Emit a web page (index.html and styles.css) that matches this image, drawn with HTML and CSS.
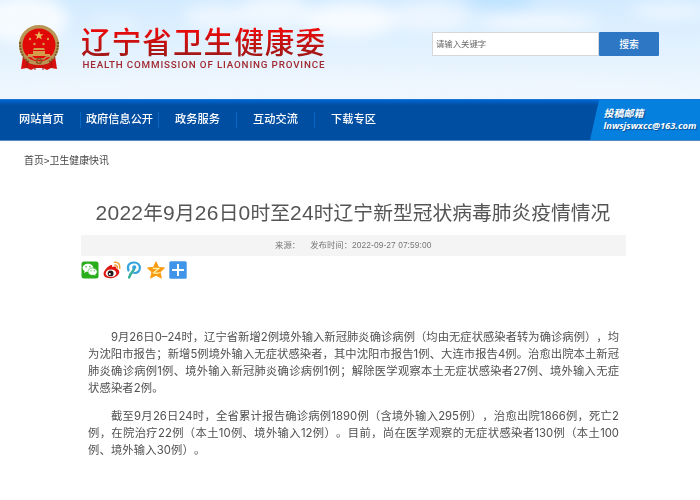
FILE: index.html
```html
<!DOCTYPE html>
<html lang="zh-CN">
<head>
<meta charset="utf-8">
<title>辽宁省卫生健康委</title>
<link rel="stylesheet" href="styles.css">
</head>
<body>
<header class="header">
  <svg class="sky" viewBox="0 0 700 99" preserveAspectRatio="none" aria-hidden="true">
    <defs>
      <linearGradient id="sky" x2="0" y2="1"><stop stop-color="#d3ebff"/><stop offset=".45" stop-color="#e1f1fe"/><stop offset="1" stop-color="#f0f7fe"/></linearGradient>
      <filter id="soft" x="-30%" y="-100%" width="160%" height="300%"><feGaussianBlur stdDeviation="7"/></filter>
    </defs>
    <rect width="700" height="99" fill="url(#sky)"/>
    <g fill="#f5faff" filter="url(#soft)">
      <ellipse cx="25" cy="20" rx="43" ry="25"/><ellipse cx="115" cy="24" rx="24" ry="9" opacity=".4"/>
      <ellipse cx="217" cy="17" rx="34" ry="13" opacity=".7"/><ellipse cx="275" cy="12" rx="35" ry="17" opacity=".8"/>
      <ellipse cx="350" cy="20" rx="48" ry="17"/><ellipse cx="430" cy="17" rx="42" ry="15" opacity=".7"/>
      <ellipse cx="538" cy="22" rx="62" ry="9" opacity=".8"/><ellipse cx="670" cy="11" rx="40" ry="8" opacity=".7"/>
      <ellipse cx="350" cy="84" rx="330" ry="10" opacity=".35"/>
    </g>
    <ellipse cx="500" cy="-2" rx="35" ry="8" fill="#bae1ff" filter="url(#soft)"/>
  </svg>
  <svg class="emblem" viewBox="0 0 42 46" aria-hidden="true">
    <path d="M5 31 3 44l6-1 4 2 4-2h8l4 2 4-2 6 1-2-13z" fill="#d6110d"/>
    <circle cx="21" cy="20" r="18" fill="#dc0907" stroke="#b99655" stroke-width="4"/>
    <path d="M2 17q0 18 14 22M40 17q0 18-14 22" fill="none" stroke="#7f5928" stroke-width="2" stroke-dasharray="2 1"/>
    <circle cx="21" cy="20" r="16.5" fill="#e00907"/>
    <path d="m21 6 1.2 3.2 3.3.1-2.6 2 1 3.2-2.9-1.9-2.9 1.9 1-3.2-2.6-2 3.3-.1z" fill="#e9b65d"/>
    <g fill="#d79c4b"><circle cx="12" cy="14" r="1.2"/><circle cx="30" cy="14" r="1.2"/><circle cx="16.5" cy="19" r="1.2"/><circle cx="25.5" cy="19" r="1.2"/><path d="M16 23h10l1 2H15zM15 26h12v3H15zM10 29h22v2H10z"/></g>
    <path d="M6 32q8-2 10 2h10q3-4 10-2M11 37q5 3 9 0 5 3 11 0" fill="none" stroke="#c09657" stroke-width="1.500"/>
    <circle cx="21" cy="36" r="2.500" fill="none" stroke="#8d5b27" stroke-width="1.500"/>
    <path d="M9 36v7m24-7v7M17 41v4m8-4v4" stroke="#9d130d"/>
  </svg>
  <svg class="brand" viewBox="0 0 248 60" role="img">
    <defs><linearGradient id="red" gradientUnits="userSpaceOnUse" x1="0" y1="13" x2="0" y2="48"><stop stop-color="#ef0909"/><stop offset="1" stop-color="#8e1c1c"/></linearGradient></defs>
    <text class="brand-cn" x="0" y="38" textLength="244" fill="url(#red)">辽宁省卫生健康委</text>
    <text class="brand-en" x="1.500" y="53" textLength="242" fill="#a02a30">HEALTH COMMISSION OF LIAONING PROVINCE</text>
  </svg>
  <form class="search">
    <input class="search-input" type="text" placeholder="请输入关键字">
    <button class="search-button" type="button">搜索</button>
  </form>
</header>
<nav class="nav">
  <a class="nav-item">网站首页</a><a class="nav-item">政府信息公开</a><a class="nav-item">政务服务</a><a class="nav-item">互动交流</a><a class="nav-item">下载专区</a>
  <div class="mail"><span class="mail-title">投稿邮箱</span><span class="mail-address">lnwsjswxcc@163.com</span></div>
</nav>
<div class="breadcrumb">首页&gt;卫生健康快讯</div>
<main class="article">
  <h1 class="title"><span class="num">2022</span>年<span class="num">9</span>月<span class="num">26</span>日<span class="num">0</span>时至<span class="num">24</span>时辽宁新型冠状病毒肺炎疫情情况</h1>
  <div class="meta"><span>来源：</span><span>发布时间：<span class="date">2022-09-27 07:59:00</span></span></div>
  <div class="share">
    <svg viewBox="0 0 18 18"><rect x=".5" y=".5" width="17" height="17" rx="2.500" fill="#27ae18"/><path d="M7 2.700c-3 0-5.400 1.800-5.400 4.100 0 1.400.8 2.500 2 3.300L3 12l2.400-1.200 1.800.2C10 11 12.300 9 12.300 6.800S10 2.700 7 2.700z" fill="#fff"/><path d="M11.500 7C9 7 7 8.600 7 10.700s2 3.600 4.500 3.600l1.500-.2 2 1-.5-1.700c1-.7 1.700-1.600 1.700-2.700C16.200 8.600 14 7 11.500 7z" fill="#fff" stroke="#27ae18" stroke-width=".6"/><g fill="#27ae18"><circle cx="5.100" cy="5.700" r=".7"/><circle cx="8.900" cy="5.700" r=".7"/><circle cx="10" cy="9.800" r=".6"/><circle cx="13.200" cy="9.800" r=".6"/></g></svg>
    <svg viewBox="0 0 18 18"><path d="M7.500 4.200c1.500-.6 2 .5 1.600 1.800 2.500-.9 4.600-.7 4.300 1.500 6 2.400 2 9-5.400 9.700C3.400 17.600.6 15.600.6 12.800.6 9.500 4.800 5.100 7.500 4.200z" fill="#dd1712"/><ellipse cx="8" cy="12.200" rx="5.200" ry="3.800" fill="#fff"/><circle cx="7.600" cy="12.400" r="2.900" fill="#201719"/><circle cx="6.800" cy="13" r="1" fill="#fff"/><path d="M11.500 1.300q5.800-.5 5.300 6M11.800 4q2.800 0 2.600 3" fill="none" stroke="#f4a034" stroke-width="1.500" stroke-linecap="round"/></svg>
    <svg viewBox="0 0 18 18" fill="none" stroke-linecap="round"><path d="M3.500 9.500C1.500 4 5 1.400 9 1.500c8 .3 7.500 11 .2 10.500" stroke="#36a3df" stroke-width="2.200"/><path d="M9.200 6C10 10.500 5 11 4.200 16.400" stroke="#3cae9a" stroke-width="2.600"/><circle cx="9.200" cy="6.200" r="2" fill="#36a3df"/></svg>
    <svg viewBox="0 0 18 18"><path d="m9 .8 2.500 5.500 6 .7-4.400 4.100 1.200 6L9 14.200l-5.300 2.900 1.200-6L.5 7l6-.7z" fill="#f99b10" stroke="#f99b10" stroke-linejoin="round"/><path d="M5.800 7.300h6l-5.200 4.500q3 1 7-.3" fill="none" stroke="#fff0a5" stroke-width="1.300"/></svg>
    <svg viewBox="0 0 18 18"><rect x=".3" y=".3" width="17.400" height="17.400" rx="1.500" fill="#4095e8"/><path d="M9 3v12M3 9h12" stroke="#fff" stroke-width="2"/></svg>
  </div>
  <div class="content">
    <p class="paragraph">
      <span class="line indent">9月26日0–24时，辽宁省新增2例境外输入新冠肺炎确诊病例（均由无症状感染者转为确诊病例），均</span>
      <span class="line">为沈阳市报告；新增5例境外输入无症状感染者，其中沈阳市报告1例、大连市报告4例。治愈出院本土新冠</span>
      <span class="line">肺炎确诊病例1例、境外输入新冠肺炎确诊病例1例；解除医学观察本土无症状感染者27例、境外输入无症</span>
      <span class="line last">状感染者2例。</span>
    </p>
    <p class="paragraph">
      <span class="line indent">截至9月26日24时，全省累计报告确诊病例1890例（含境外输入295例），治愈出院1866例，死亡2</span>
      <span class="line">例，在院治疗22例（本土10例、境外输入12例）。目前，尚在医学观察的无症状感染者130例（本土100</span>
      <span class="line last">例、境外输入30例）。</span>
    </p>
  </div>
</main>
</body>
</html>
```
FILE: styles.css
```css
* { box-sizing: border-box; }
body {
  margin: 0;
  background: #fff;
  color: #505050;
  font-family: "Liberation Sans", "Noto Sans CJK SC", sans-serif;
  text-spacing-trim: space-all;
}
.header {
  position: relative;
  display: flex;
  align-items: flex-start;
  height: 99px;
  padding: 25px 41px 0 18px;
  overflow: hidden;
}
.sky { position: absolute; inset: 0; width: 100%; height: 100%; z-index: -1; }
.emblem { width: 42px; height: 46px; }
.brand { width: 248px; height: 60px; margin: -10px 0 0 21px; overflow: visible; }
.brand-cn { font: 500 29.500px "Noto Sans CJK SC", sans-serif; }
.brand-en { font: 500 9.800px Roboto, sans-serif; }
.search { display: flex; margin: 7px 0 0 auto; height: 24px; }
.search-input {
  width: 167px;
  padding: 0 3px 2px;
  border: 1px solid #d5d8db;
  border-radius: 0;
  background: #fff;
  font: 8.400px "Noto Sans CJK SC", sans-serif;
}
.search-input::placeholder { color: #666; }
.search-button {
  width: 60px;
  padding: 0 0 1px;
  border: 0;
  border-radius: 1px;
  background: #2d77c5;
  color: #fff;
  font: 500 9.800px "Noto Sans CJK SC", sans-serif;
}
.nav {
  display: flex;
  height: 42px;
  padding-left: 2.500px;
  border-bottom: 1px solid #5489c1;
  background: linear-gradient(#2585df 0, #0365ce 1px, #005dbe 3px, #004ea2 6px);
}
.nav-item {
  position: relative;
  width: 78px;
  text-align: center;
  color: #fff;
  font-size: 11.200px;
  font-weight: 500;
  line-height: 41px;
}
.nav-item:not(:nth-child(5))::after {
  content: "";
  position: absolute;
  top: 13px;
  right: 0;
  width: 1px;
  height: 16px;
  background: #0867c2;
}
.mail {
  display: flex;
  flex-direction: column;
  gap: 1px;
  width: 110px;
  margin: 1px 0 0 auto;
  padding: 7px 0 0 13.500px;
  background: #0580df;
  clip-path: polygon(9px 0, 100% 0, 100% 100%, 0 100%);
  color: #fff;
  font-family: "Open Sans", "Noto Sans CJK SC", sans-serif;
  font-weight: 700;
  font-style: italic;
  line-height: 12px;
  text-shadow: 1px 1px 1px #064c91;
  white-space: nowrap;
}
.mail-title { font-size: 10px; }
.mail-address { font-size: 9.300px; line-height: 11px; }
.breadcrumb {
  padding: 11px 24px 0;
  height: 54px;
  font-size: 9.900px;
  line-height: 18px;
  color: #444;
}
.article { width: 545.500px; margin-left: 80.500px; }
.title {
  margin: 0 0 0 15px;
  width: 516px;
  height: 40px;
  color: #555;
  font-size: 19.770px;
  font-weight: 400;
  line-height: 36px;
  white-space: nowrap;
}
.num { font-size: 21px; letter-spacing: .27px; line-height: 1; }
.meta {
  display: flex;
  justify-content: center;
  gap: 10px;
  height: 21px;
  background: #f4f4f4;
  color: #777;
  font-size: 8.400px;
  line-height: 21px;
}
.date { letter-spacing: .08px; }
.share { display: flex; gap: 4px; margin-top: 5px; }
.share svg { width: 18px; height: 18px; }
.content {
  width: 531px;
  margin: 50px 0 0 7.500px;
  font-family: "Inter", "Noto Sans CJK SC", sans-serif;
  font-size: 11.300px;
  line-height: 17px;
}
.paragraph { margin: 0 0 11px; }
.line { display: block; white-space: nowrap; text-align-last: justify; }
.indent { padding-left: 23px; }
.last { text-align-last: left; letter-spacing: .15px; }
```
